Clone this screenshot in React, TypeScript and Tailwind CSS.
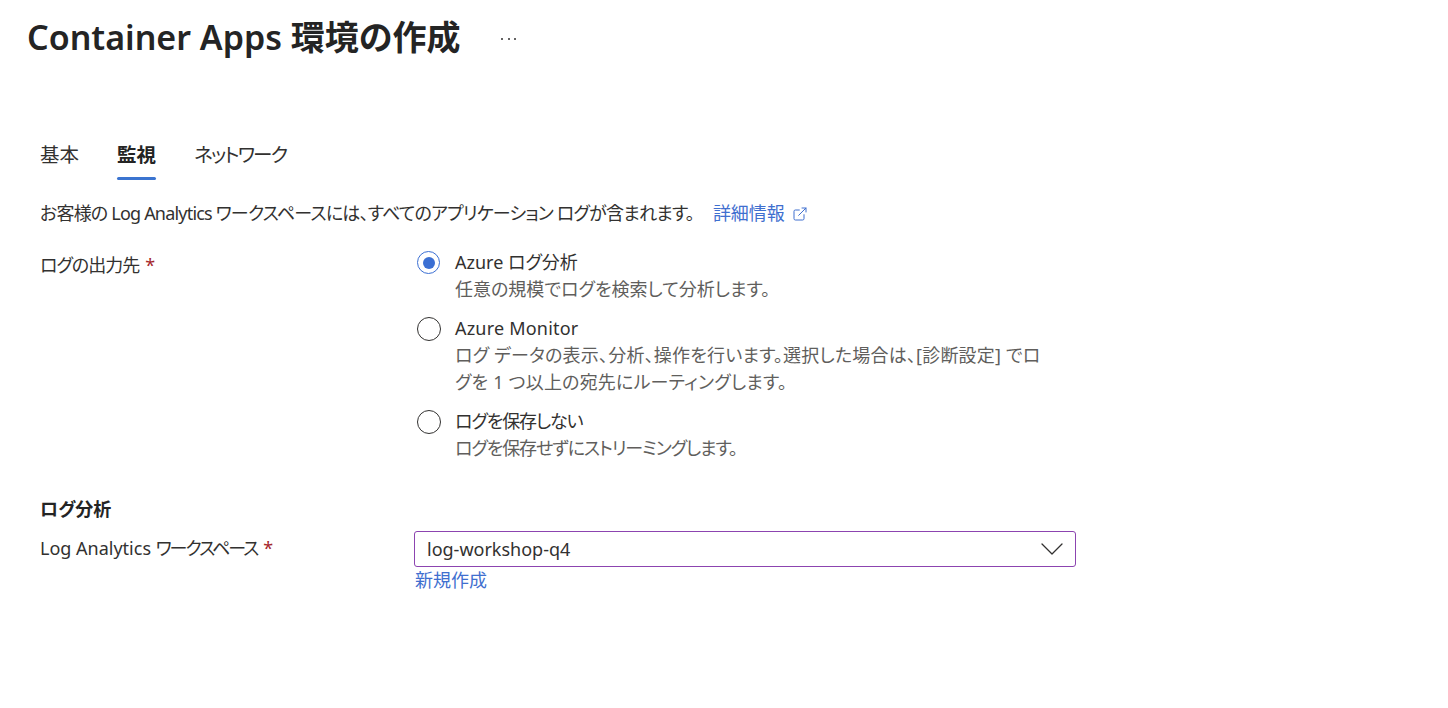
import { ExternalLink } from "lucide-react";

interface RadioOption {
  id: string;
  title: string;
  lines: string[];
  tracking: string;
}

const options: RadioOption[] = [
  {
    id: "analytics",
    title: "Azure ログ分析",
    lines: ["任意の規模でログを検索して分析します。"],
    tracking: "tracking-[0px]",
  },
  {
    id: "monitor",
    title: "Azure Monitor",
    lines: [
      "ログ データの表示、分析、操作を行います。選択した場合は、[診断設定] でロ",
      "グを 1 つ以上の宛先にルーティングします。",
    ],
    tracking: "tracking-[0.2px]",
  },
  {
    id: "none",
    title: "ログを保存しない",
    lines: ["ログを保存せずにストリーミングします。"],
    tracking: "tracking-[-1.1px]",
  },
];

const tabs = [
  { label: "基本", tracking: "" },
  { label: "監視", tracking: "" },
  { label: "ネットワーク", tracking: "tracking-[-1.8px]" },
];

function Radio({ checked }: { checked: boolean }) {
  return checked ? (
    <span className="flex h-[23px] w-[23px] shrink-0 items-center justify-center rounded-full border border-[#3b6fd3]">
      <span className="h-[12px] w-[12px] rounded-full bg-[#3b6fd3]" />
    </span>
  ) : (
    <span className="h-[24px] w-[24px] shrink-0 rounded-full border-[1.5px] border-[#323130]" />
  );
}

function Required() {
  return <span className="ml-[6px] tracking-normal text-[#a4262c]">*</span>;
}

function Chevron() {
  return (
    <svg width="22" height="12" viewBox="0 0 22 12" fill="none">
      <polyline
        points="1,1 11,11 21,1"
        stroke="#323130"
        strokeWidth="1.3"
        strokeLinejoin="round"
        strokeLinecap="round"
      />
    </svg>
  );
}

export default function App() {
  const selected = "analytics";
  const activeTab = "監視";

  return (
    <div className="min-h-screen bg-white text-[18px] leading-[27px] text-[#323130] [font-family:'Noto_Sans','Noto_Sans_CJK_JP',sans-serif] [font-feature-settings:'palt']">
      {/* header */}
      <div className="flex items-center pl-[27px] pt-[15px]">
        <h1 className="text-[34px] font-semibold leading-[44px] text-[#242424]">
          Container Apps 環境の作成
        </h1>
        <span className="ml-[41px] mt-[4px] flex gap-[4.5px]">
          <span className="h-[2px] w-[2px] rounded-full bg-[#323130]" />
          <span className="h-[2px] w-[2px] rounded-full bg-[#323130]" />
          <span className="h-[2px] w-[2px] rounded-full bg-[#323130]" />
        </span>
      </div>

      <div className="px-[40px]">
        {/* tabs */}
        <div className="mt-[82px] flex gap-[38px]">
          {tabs.map((t) => {
            const active = t.label === activeTab;
            return (
              <div key={t.label} className="flex flex-col">
                <span
                  className={
                    active
                      ? "text-[19.5px] font-bold leading-[28px] text-[#242424]"
                      : `text-[19.5px] leading-[28px] ${t.tracking}`
                  }
                >
                  {t.label}
                </span>
                <span
                  className={
                    active
                      ? "mt-[8px] h-[3px] rounded-sm bg-[#3b74d0]"
                      : "mt-[8px] h-[3px]"
                  }
                />
              </div>
            );
          })}
        </div>

        {/* description */}
        <p className="mt-[20px] flex items-center">
          <span className="tracking-[-0.8px]">
            お客様の Log Analytics ワークスペースには、すべてのアプリケーション ログが含まれます。
          </span>
          <a className="ml-[19px] flex items-center gap-[7px] text-[#3f6fcf]" href="#">
            詳細情報
            <ExternalLink className="h-[16px] w-[16px]" strokeWidth={1.5} />
          </a>
        </p>

        {/* log destination */}
        <div className="mt-[22px] flex">
          <div className="w-[374px] shrink-0 pt-[3px] tracking-[-1px]">
            ログの出力先
            <Required />
          </div>
          <div className="flex flex-col gap-[12px]">
            {options.map((o) => (
              <div key={o.id} className="flex items-start">
                <div className="flex h-[27px] w-[41px] items-center pl-[3px]">
                  <Radio checked={o.id === selected} />
                </div>
                <div className={`flex flex-col ${o.tracking}`}>
                  <span>{o.title}</span>
                  {o.lines.map((l) => (
                    <span key={l} className="whitespace-nowrap text-[#605e5c]">
                      {l}
                    </span>
                  ))}
                </div>
              </div>
            ))}
          </div>
        </div>

        {/* log analytics */}
        <h2 className="mt-[34px] font-bold text-[#242424]">ログ分析</h2>
        <div className="mt-[8px] flex items-start">
          <div className="w-[374px] shrink-0 pt-[4px]">
            Log Analytics <span className="tracking-[-2px]">ワークスペース</span>
            <Required />
          </div>
          <div className="flex flex-col">
            <button className="flex h-[36px] w-[662px] items-center justify-between rounded-[3px] border border-[#8c44b0] pl-[12px] pr-[12px] text-left">
              <span>log-workshop-q4</span>
              <Chevron />
            </button>
            <a href="#" className="pl-[1px] text-[#3f6fcf]">
              新規作成
            </a>
          </div>
        </div>
      </div>
    </div>
  );
}
